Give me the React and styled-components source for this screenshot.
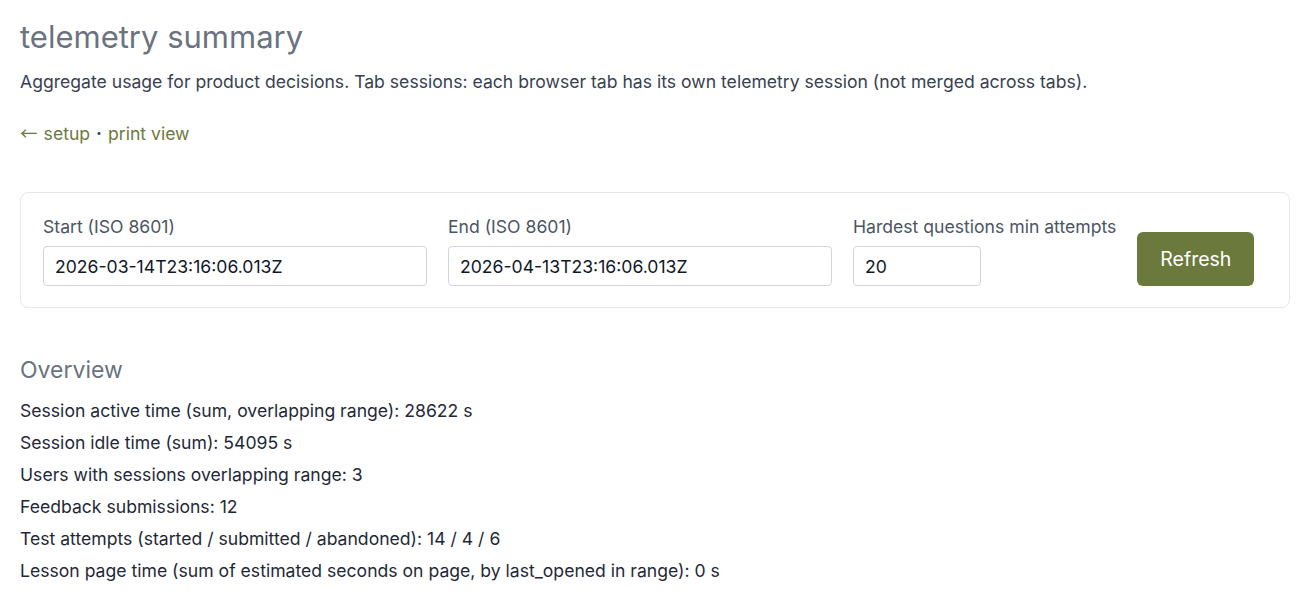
import React from "react";
import styled, { createGlobalStyle } from "styled-components";

const Global = createGlobalStyle`
  html, body { margin: 0; padding: 0; background: #ffffff; }
  body { font-family: Inter, "Noto Sans", sans-serif; color: #374151; }
  * { box-sizing: border-box; }
`;

const Page = styled.main`
  padding: 15px 12px 0 20px;
`;

const Title = styled.h1`
  margin: 0;
  font-size: 31px;
  line-height: 44px;
  font-weight: 400;
  color: #6b7280;
`;

const Lead = styled.p`
  margin: 10px 0 0;
  font-size: 17.6px;
  line-height: 26px;
  color: #374151;
`;

const Nav = styled.nav`
  margin-top: 26px;
  height: 26px;
  font-size: 17.6px;
  line-height: 26px;
  color: #374151;
  display: flex;
  align-items: center;
  gap: 6px;
`;

const NavLink = styled.a`
  color: #6b7a3a;
  text-decoration: none;
`;

const Arrow = styled.span`
  font-family: "Noto Sans CJK SC", sans-serif;
  line-height: 1;
  margin-right: 6px;
`;

const Dot = styled.span`
  font-size: 17.6px;
  font-weight: 700;
`;

const Card = styled.form`
  margin-top: 45px;
  border: 1px solid #e5e7eb;
  border-radius: 8px;
  padding: 23px 22px 21px;
  display: flex;
  align-items: flex-end;
  gap: 21px;
`;

const Field = styled.label`
  display: flex;
  flex-direction: column;
  gap: 8px;
  font-size: 17.6px;
  line-height: 22px;
  color: #4b5563;
  white-space: nowrap;
`;

const Input = styled.input`
  width: ${(p) => p.$w}px;
  height: 40px;
  border: 1px solid #d1d5db;
  border-radius: 4px;
  padding: 0 11px;
  font-family: Inter, "Noto Sans", sans-serif;
  font-size: 17.6px;
  color: #111827;
  background: #fff;
  outline: none;
`;

const Button = styled.button`
  height: 54px;
  width: 117px;
  border: none;
  border-radius: 6px;
  background: #6b7a3c;
  color: #ffffff;
  font-family: Inter, "Noto Sans", sans-serif;
  font-size: 19.5px;
`;

const Section = styled.section`
  margin-top: 47px;
`;

const H2 = styled.h2`
  margin: 0;
  font-size: 23px;
  line-height: 30px;
  font-weight: 400;
  color: #6b7280;
`;

const List = styled.div`
  margin-top: 10px;
  display: flex;
  flex-direction: column;
`;

const Row = styled.p`
  margin: 0;
  font-size: 17.6px;
  line-height: 32px;
  color: #1f2937;
`;

const rows = [
  "Session active time (sum, overlapping range): 28622 s",
  "Session idle time (sum): 54095 s",
  "Users with sessions overlapping range: 3",
  "Feedback submissions: 12",
  "Test attempts (started / submitted / abandoned): 14 / 4 / 6",
  "Lesson page time (sum of estimated seconds on page, by last_opened in range): 0 s",
];

export default function App() {
  return (
    <>
      <Global />
      <Page>
        <Title>telemetry summary</Title>
        <Lead>
          Aggregate usage for product decisions. Tab sessions: each browser tab has its own telemetry session (not merged across tabs).
        </Lead>
        <Nav>
          <NavLink href="#"><Arrow>←</Arrow>setup</NavLink>
          <Dot>·</Dot>
          <NavLink href="#">print view</NavLink>
        </Nav>
        <Card onSubmit={(e) => e.preventDefault()}>
          <Field>
            Start (ISO 8601)
            <Input $w={384} defaultValue="2026-03-14T23:16:06.013Z" />
          </Field>
          <Field>
            End (ISO 8601)
            <Input $w={384} defaultValue="2026-04-13T23:16:06.013Z" />
          </Field>
          <Field>
            Hardest questions min attempts
            <Input $w={128} defaultValue="20" />
          </Field>
          <Button type="submit">Refresh</Button>
        </Card>
        <Section>
          <H2>Overview</H2>
          <List>
            {rows.map((r) => (
              <Row key={r}>{r}</Row>
            ))}
          </List>
        </Section>
      </Page>
    </>
  );
}
